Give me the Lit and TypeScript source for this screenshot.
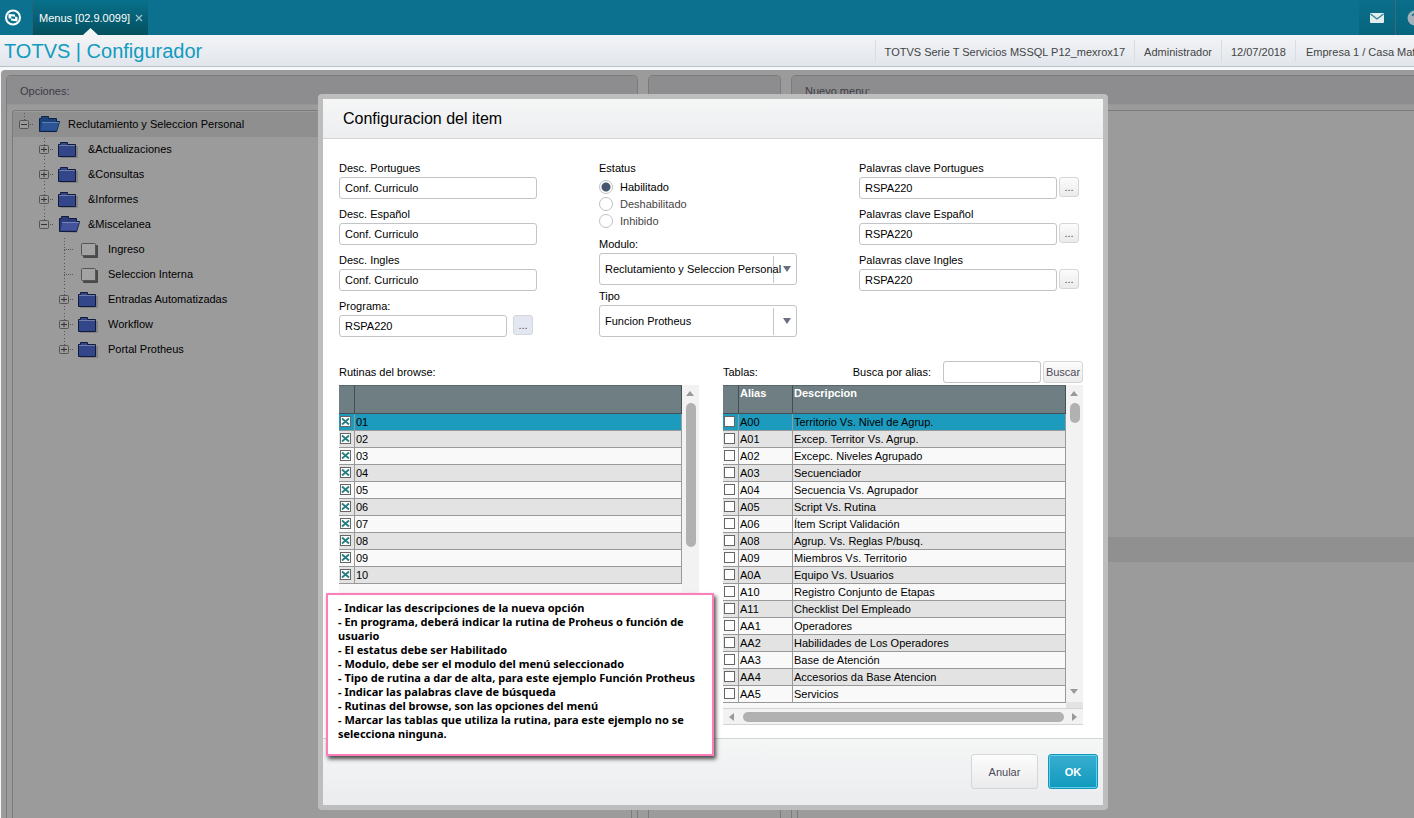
import { LitElement, html, svg, css, nothing } from "lit";
import { customElement, property } from "lit/decorators.js";
import { classMap } from "lit/directives/class-map.js";

interface TreeNode {
  label: string;
  icon: "open-root" | "open" | "closed" | "page";
  children?: TreeNode[];
}

const TREE: TreeNode = {
  label: "Reclutamiento y Seleccion Personal",
  icon: "open-root",
  children: [
    { label: "&Actualizaciones", icon: "closed" },
    { label: "&Consultas", icon: "closed" },
    { label: "&Informes", icon: "closed" },
    {
      label: "&Miscelanea",
      icon: "open",
      children: [
        { label: "Ingreso", icon: "page" },
        { label: "Seleccion Interna", icon: "page" },
        { label: "Entradas Automatizadas", icon: "closed" },
        { label: "Workflow", icon: "closed" },
        { label: "Portal Protheus", icon: "closed" },
      ],
    },
  ],
};

const ROUTINES = ["01", "02", "03", "04", "05", "06", "07", "08", "09", "10"];

const TABLES: [string, string][] = [
  ["A00", "Territorio Vs. Nivel de Agrup."],
  ["A01", "Excep. Territor Vs. Agrup."],
  ["A02", "Excepc. Niveles Agrupado"],
  ["A03", "Secuenciador"],
  ["A04", "Secuencia Vs. Agrupador"],
  ["A05", "Script Vs. Rutina"],
  ["A06", "Ítem Script Validación"],
  ["A08", "Agrup. Vs. Reglas P/busq."],
  ["A09", "Miembros Vs. Territorio"],
  ["A0A", "Equipo Vs. Usuarios"],
  ["A10", "Registro Conjunto de Etapas"],
  ["A11", "Checklist Del Empleado"],
  ["AA1", "Operadores"],
  ["AA2", "Habilidades de Los Operadores"],
  ["AA3", "Base de Atención"],
  ["AA4", "Accesorios da Base Atencion"],
  ["AA5", "Servicios"],
];

const NOTES = [
  "- Indicar las descripciones de la nueva opción",
  "- En programa, deberá indicar la rutina de Proheus o función de usuario",
  "- El estatus debe ser Habilitado",
  "- Modulo, debe ser el modulo del menú seleccionado",
  "- Tipo de rutina a dar de alta, para este ejemplo Función Protheus",
  "- Indicar las palabras clave de búsqueda",
  "- Rutinas del browse, son las opciones del menú",
  "- Marcar las tablas que utiliza la rutina, para este ejemplo no se selecciona ninguna.",
];

@customElement("menu-tree")
class MenuTree extends LitElement {
  static styles = css`
    :host { display: block; font-size: 11px; color: #000; }
    ul { list-style: none; margin: 0; padding: 0; }
    .branch { padding-left: 20px; }
    .row { display: flex; align-items: center; height: 25px; white-space: nowrap; }
    .row span { padding-bottom: 2px; }
    .selected { background: #8f8f8f; }
    .glyph { flex: none; width: 55px; height: 25px; }
  `;

  private icon(kind: TreeNode["icon"]) {
    if (kind === "page") {
      return svg`
        <rect x="30" y="8" width="15" height="13" rx="1" fill="#4a4a4a"/>
        <rect x="28.500" y="6.500" width="14" height="12" rx="1" fill="#a3a3a3" stroke="#555"/>`;
    }
    if (kind === "closed") {
      return svg`
        <rect x="27" y="9" width="18" height="12" rx="1" fill="#808080"/>
        <path d="M25.500 19.500 V7.500 H27.500 V5.500 H34.500 V7.500 H42.500 V19.500 Z" fill="#33468a" stroke="#101a3c"/>
        <path d="M26 8.500 H42" stroke="#6f7da8"/>`;
    }
    const root = kind === "open-root";
    return svg`
      <path d="M27 21 H44 L47 11 L45 11 L42 20 Z" fill="#858585"/>
      <path d="M26.500 19.500 V6.500 H28.500 V4.500 H35.500 V6.500 H43.500 V9.500 H46.500 L43.500 19.500 Z" fill=${root ? "#1c4279" : "#2b3b7c"} stroke=${root ? "#0b2447" : "#101a3c"}/>
      <path d="M29.500 10.500 H46 L43.500 18.500 H27.500 Z" fill=${root ? "#2d5596" : "#42539b"}/>
      <path d="M29 10.500 H46" stroke=${root ? "#5c82b5" : "#7482b4"}/>`;
  }

  private row(node: TreeNode, level: number, last: boolean): unknown {
    const open = !!node.children;
    const leaf = node.icon === "page";
    return html`
      <li role="treeitem" aria-expanded=${leaf ? nothing : String(open)}>
        <div class=${classMap({ row: true, selected: level === 0 })}>
          <svg class="glyph" viewBox="0 0 55 25" aria-hidden="true">
            <path d=${`M11.500 1 V${last ? 12 : 25}`} stroke="#555" stroke-dasharray="1 2"/>
            <path d="M11 12.500 H21" stroke="#555" stroke-dasharray="1 1"/>
            ${leaf ? nothing : svg`
              <rect x="6.500" y="8.500" width="9" height="8" rx="1" fill="#9b9b9b" stroke="#555"/>
              <path d="M8 12.500 H14" stroke="#333"/>
              ${open ? nothing : svg`<path d="M11 10 V15" stroke="#333"/>`}`}
            ${this.icon(node.icon)}
          </svg>
          <span>${node.label}</span>
        </div>
        ${node.children
          ? html`<ul role="group" class="branch">
              ${node.children.map((c, i) => this.row(c, level + 1, i === node.children!.length - 1))}
            </ul>`
          : nothing}
      </li>`;
  }

  render() {
    return html`<ul role="tree" aria-label="Opciones">${this.row(TREE, 0, true)}</ul>`;
  }
}

@customElement("scroll-rail")
class ScrollRail extends LitElement {
  @property({ type: Boolean, reflect: true }) horizontal = false;
  @property({ type: Boolean }) corner = false;
  @property() size = "20px";

  static styles = css`
    :host { display: flex; flex-direction: column; align-items: center; width: 17px; background: #f2f2f2; }
    :host([horizontal]) {
      flex-direction: row; width: auto; height: 17px; box-sizing: border-box;
      border-top: 1px solid #d4d4d4; border-bottom: 1px solid #d4d4d4;
    }
    svg { flex: none; width: 17px; height: 18px; }
    .thumb { width: 10px; border-radius: 5px; background: #b1b1b1; }
    .across { flex: 1; height: 10px; margin: 0 2px 0 3px; border-radius: 5px; background: #b1b1b1; }
    .space { flex: 1; }
    .corner { width: 17px; height: 6px; background: #e3e3e3; }
  `;

  render() {
    if (this.horizontal) {
      return html`
        <svg viewBox="0 0 17 18"><path d="M11 5 L6 9 L11 13 Z" fill="#999"/></svg>
        <div class="across"></div>
        <svg viewBox="0 0 17 18"><path d="M6 5 L11 9 L6 13 Z" fill="#999"/></svg>`;
    }
    return html`
      <svg viewBox="0 0 17 18"><path d="M4 11 L8 6 L12 11 Z" fill="#999"/></svg>
      <div class="thumb" style="height:${this.size}"></div>
      <div class="space"></div>
      <svg viewBox="0 0 17 18"><path d="M4 5 L8 10 L12 5 Z" fill="#999"/></svg>
      ${this.corner ? html`<div class="corner"></div>` : nothing}`;
  }
}

@customElement("item-dialog")
class ItemDialog extends LitElement {
  static styles = css`
    :host {
      display: block; position: relative; box-sizing: border-box; width: 790px; max-width: 100%;
      border: 5px solid #bdbdbd; border-radius: 4px; background: #fff; color: #000;
      font: 11px/14px "Liberation Sans", Arial, sans-serif;
    }
    input, select, button { font: inherit; color: inherit; margin: 0; box-sizing: border-box; }
    header {
      padding: 10px 20px; border-bottom: 1px solid #d3d5d6;
      background: linear-gradient(#f5f6f6, #eceef0);
    }
    h2 { margin: 0; font-size: 16px; line-height: 19px; font-weight: 400; }
    .body { padding: 22px 20px 13px 16px; }
    form { display: grid; grid-template-columns: 1fr 1fr 224px; margin: 0; }
    .column { display: flex; flex-direction: column; gap: 8px; }
    .field { display: flex; flex-direction: column; gap: 2px; }
    .line { display: flex; gap: 2px; }
    .wide { gap: 6px; }
    .text {
      width: 198px; height: 22px; padding: 0 5px; border: 1px solid #c2c4c8; border-radius: 3px;
      background: #fff; outline: none;
    }
    .program { width: 168px; }
    .more, .search-button, .cancel {
      border: 1px solid #d5d6d8; border-radius: 3px; background: linear-gradient(#fcfcfc, #ebebeb); color: #4c4c58; padding: 0;
    }
    .more { width: 20px; height: 20px; line-height: 16px; }
    .focused { background: #e3e7f2; }
    fieldset { margin: 0; padding: 0; border: 0; min-width: 0; }
    legend { padding: 0; margin: 0 0 3px; }
    .option { display: flex; align-items: center; gap: 7px; height: 17px; color: #444; }
    .option.on { color: #000; }
    .option input {
      appearance: none; width: 14px; height: 14px; border: 1px solid #bfc1c4; border-radius: 50%; background: #fff;
    }
    .option input:checked { background: radial-gradient(circle, #47566c 0 4px, #fff 5px); }
    .middle { gap: 4px; }
    .middle fieldset { margin-bottom: 4px; }
    select {
      appearance: none; width: 198px; height: 32px; padding: 0 4px 0 5px; border: 1px solid #c2c4c8; border-radius: 3px;
      background:
        url("data:image/svg+xml,%3Csvg xmlns='http://www.w3.org/2000/svg' width='8' height='6'%3E%3Cpath d='M0 0H8L4 6Z' fill='%236a6f80'/%3E%3C/svg%3E") no-repeat right 5px center,
        linear-gradient(#c2c4c8, #c2c4c8) no-repeat right 22px center / 1px 27px,
        #fff;
    }
    .lists { display: grid; grid-template-columns: 1fr 1fr; column-gap: 24px; margin-top: 24px; }
    .list { display: flex; flex-direction: column; }
    .caption { display: flex; align-items: center; height: 22px; margin-bottom: 2px; }
    .search { display: flex; align-items: center; margin-left: auto; gap: 2px; }
    .search label { margin-right: 10px; }
    .search .text { width: 98px; }
    .search-button { width: 40px; height: 22px; }
    .grid { flex: 1; display: grid; grid-template-columns: 1fr 17px; background: #f8f8f8; }
    .padded { padding-bottom: 5px; }
    .bounded { flex: none; }
    table { width: 100%; align-self: start; border-collapse: separate; border-spacing: 0; table-layout: fixed; }
    .tick { width: 16px; }
    .alias { width: 54px; }
    th, td { box-sizing: border-box; padding: 0 1px; text-align: left; border-right: 1px solid #999; overflow: hidden; white-space: nowrap; }
    th {
      height: 29px; vertical-align: top; color: #fff; font-weight: 700;
      background: #6e7e82; border-right-color: #454f52; border-bottom: 1px solid #454f52; border-top: 1px solid #596669;
    }
    td { height: 17px; line-height: 16px; border-bottom: 1px solid #999; background: #f9f9f9; }
    tr:nth-child(even) td { background: #e3e3e3; }
    tr.current td { background: #1d9bbe; }
    td input { appearance: none; display: block; width: 11px; height: 11px; margin-bottom: 2px; border: 1px solid #666; background: #fff; }
    td input:checked {
      background: #fff url("data:image/svg+xml,%3Csvg xmlns='http://www.w3.org/2000/svg' width='9' height='9'%3E%3Cpath d='M1 1.500L8 7.500M8 1.500L1 7.500' stroke='%23257f80' stroke-width='1.800'/%3E%3C/svg%3E") no-repeat center;
    }
    footer {
      display: flex; justify-content: flex-end; gap: 10px; padding: 15px 5px 16px;
      border-top: 1px solid #d3d5d6; background: linear-gradient(#f5f6f6, #eaecee);
    }
    .cancel { width: 67px; height: 35px; }
    .ok {
      width: 50px; height: 35px; padding: 0; border: 1px solid #1595b8; border-radius: 3px; color: #fff; font-weight: 700;
      background: linear-gradient(#38aed0, #109abd); box-shadow: inset 0 0 0 1px #5fd0ec;
    }
    .note {
      position: absolute; left: 3px; top: 494px; box-sizing: border-box; width: 388px; height: 163px; padding: 6px 10px;
      border: 2px solid #ff7dbb; background: #fff; box-shadow: 2px 3px 4px rgba(0, 0, 0, 0.7);
      font: 700 11px/14px "Noto Sans", Verdana, sans-serif;
    }
    .note p { margin: 0; }
  `;

  private textField(id: string, label: string, value: string, browse = false) {
    return html`
      <div class="field">
        <label for=${id}>${label}</label>
        <div class="line">
          <input class="text" id=${id} type="text" .value=${value} />
          ${browse ? html`<button type="button" class="more" aria-label=${"Buscar " + label}>...</button>` : nothing}
        </div>
      </div>`;
  }

  private radio(label: string, checked = false) {
    return html`
      <label class=${classMap({ option: true, on: checked })}>
        <input type="radio" name="estatus" .checked=${checked} />${label}
      </label>`;
  }

  render() {
    return html`
      <header><h2 id="title">Configuracion del item</h2></header>
      <div class="body">
        <form>
          <div class="column">
            ${this.textField("desc-pt", "Desc. Portugues", "Conf. Curriculo")}
            ${this.textField("desc-es", "Desc. Español", "Conf. Curriculo")}
            ${this.textField("desc-en", "Desc. Ingles", "Conf. Curriculo")}
            <div class="field">
              <label for="program">Programa:</label>
              <div class="line wide">
                <input class="text program" id="program" type="text" .value=${"RSPA220"} />
                <button type="button" class="more focused" aria-label="Buscar programa">...</button>
              </div>
            </div>
          </div>
          <div class="column middle">
            <fieldset>
              <legend>Estatus</legend>
              ${this.radio("Habilitado", true)} ${this.radio("Deshabilitado")} ${this.radio("Inhibido")}
            </fieldset>
            <div class="field">
              <label for="module">Modulo:</label>
              <select id="module"><option>Reclutamiento y Seleccion Personal</option></select>
            </div>
            <div class="field">
              <label for="kind">Tipo</label>
              <select id="kind"><option>Funcion Protheus</option></select>
            </div>
          </div>
          <div class="column">
            ${this.textField("key-pt", "Palavras clave Portugues", "RSPA220", true)}
            ${this.textField("key-es", "Palavras clave Español", "RSPA220", true)}
            ${this.textField("key-en", "Palavras clave Ingles", "RSPA220", true)}
          </div>
        </form>

        <div class="lists">
          <section class="list">
            <div class="caption">Rutinas del browse:</div>
            <div class="grid">
              <table aria-label="Rutinas del browse">
                <colgroup><col class="tick" /><col /></colgroup>
                <thead><tr><th></th><th></th></tr></thead>
                <tbody>
                  ${ROUTINES.map((r, i) => html`
                    <tr class=${classMap({ current: i === 0 })}>
                      <td><input type="checkbox" aria-label=${r} .checked=${true} /></td>
                      <td>${r}</td>
                    </tr>`)}
                </tbody>
              </table>
              <scroll-rail size="144px"></scroll-rail>
            </div>
          </section>
          <section class="list">
            <div class="caption">
              <span>Tablas:</span>
              <div class="search">
                <label for="alias">Busca por alias:</label>
                <input class="text" id="alias" type="text" />
                <button type="button" class="search-button">Buscar</button>
              </div>
            </div>
            <div class="grid bounded">
              <div class="padded">
                <table aria-label="Tablas">
                  <colgroup><col class="tick" /><col class="alias" /><col /></colgroup>
                  <thead><tr><th></th><th>Alias</th><th>Descripcion</th></tr></thead>
                  <tbody>
                    ${TABLES.map(([alias, text], i) => html`
                      <tr class=${classMap({ current: i === 0 })}>
                        <td><input type="checkbox" aria-label=${alias} /></td>
                        <td>${alias}</td>
                        <td>${text}</td>
                      </tr>`)}
                  </tbody>
                </table>
              </div>
              <scroll-rail size="20px" corner></scroll-rail>
            </div>
            <scroll-rail horizontal></scroll-rail>
          </section>
        </div>
      </div>
      <footer>
        <button type="button" class="cancel">Anular</button>
        <button type="button" class="ok">OK</button>
      </footer>
      <aside class="note">${NOTES.map((n) => html`<p>${n}</p>`)}</aside>`;
  }
}

@customElement("app-root")
class AppRoot extends LitElement {
  static styles = css`
    :host {
      display: flex; flex-direction: column; min-height: 100vh; overflow: hidden; background: #f6f7f8;
      font: 11px/14px "Liberation Sans", Arial, sans-serif; color: #333;
    }
    button { font: inherit; color: inherit; padding: 0; border: 0; background: none; }
    .topbar { display: flex; height: 35px; background: #0b718e; color: #fff; }
    .home { width: 33px; border-right: 1px solid #27637a; display: flex; align-items: center; padding-left: 4px; box-sizing: border-box; }
    .tab {
      position: relative; display: flex; align-items: center; gap: 5px; padding: 0 5px 0 6px;
      background: linear-gradient(#08718c, #04505f);
    }
    .tab .close { display: flex; color: #9fc3ce; }
    .notch { position: absolute; left: 50px; bottom: 0; }
    .actions { display: flex; margin-left: auto; }
    .mail { width: 37px; display: flex; align-items: center; justify-content: center; background: linear-gradient(#0a6f8b, #07657d); border-right: 1px solid #3c6878; box-sizing: border-box; }
    .help { width: 18px; overflow: hidden; display: flex; align-items: center; padding-left: 11px; background: linear-gradient(#0a6f8b, #07657d); box-sizing: border-box; }
    .help svg { flex: none; }
    .titlebar {
      display: flex; align-items: center; height: 31px; padding-left: 4px; overflow: hidden;
      border-bottom: 1px solid #b9c1c9; background: linear-gradient(#f3f4f6, #e1e6ec);
    }
    h1 { margin: 0; font-size: 20px; line-height: 24px; font-weight: 400; color: #109bc0; white-space: nowrap; }
    .status { display: flex; list-style: none; margin: 0 0 0 auto; padding: 0; color: #444; white-space: nowrap; }
    .status li { padding: 5px 9px 3px; border-left: 1px solid #d9dde2; }
    .status li:last-child { flex: none; width: 119px; box-sizing: border-box; padding: 5px 0 3px 10px; overflow: hidden; }
    .stage { flex: 1; display: grid; grid-template-columns: minmax(0, 1fr); margin: 3px 0 0 1px; background: #9b9b9b; border-radius: 4px 0 0 0; }
    .workspace { grid-area: 1 / 1; display: grid; grid-template-columns: 1fr 133px 1fr; gap: 10px; width: calc(100% + 15px); box-sizing: border-box; padding: 5px 6px 0 5px; }
    .panel { display: flex; flex-direction: column; border: 1px solid #7b7b7b; border-bottom: 0; border-radius: 5px 5px 0 0; }
    .panel-title { height: 29px; padding: 0 13px; line-height: 31px; border-bottom: 1px solid #969696; border-radius: 4px 4px 0 0; background: #8d8d8f; box-sizing: border-box; color: #3c3c44; }
    .inset { flex: 1; margin: 5px 5px 0; border: 1px solid #7b7b7b; border-bottom: 0; border-radius: 3px 3px 0 0; padding-top: 1px; }
    .result { padding-top: 426px; }
    .band { height: 25px; background: #909090; }
    item-dialog { grid-area: 1 / 1; z-index: 1; justify-self: center; align-self: start; margin: 24px 0 8px 11px; }
  `;

  render() {
    return html`
      <nav class="topbar">
        <button class="home" aria-label="Inicio">
          <svg width="18" height="18" viewBox="0 0 18 18">
            <circle cx="9" cy="8.500" r="7" fill="none" stroke="#fff" stroke-width="2"/>
            <path d="M4.500 5 L11 5.500 V7.500 L13.500 8 V12.500 L7 11.500 V9.800 L4.500 9.300 Z" fill="#fff"/>
            <path d="M7.200 7.200 L11 7.700 V10 L7.200 9.500 Z" fill="#0b718e"/>
          </svg>
        </button>
        <div class="tab">
          <span>Menus [02.9.0099]</span>
          <button class="close" aria-label="Cerrar">
            <svg width="8" height="8" viewBox="0 0 8 8"><path d="M1 1 L7 7 M7 1 L1 7" stroke="currentColor" stroke-width="1.200"/></svg>
          </button>
          <svg class="notch" width="15" height="7" viewBox="0 0 15 7"><path d="M0 7 L7.500 0 L15 7 Z" fill="#f3f4f6"/></svg>
        </div>
        <div class="actions">
          <button class="mail" aria-label="Mensajes">
            <svg width="14" height="10" viewBox="0 0 14 10">
              <rect width="14" height="10" rx="1" fill="#e3edf0"/>
              <path d="M0.500 1 L7 6 L13.500 1" fill="none" stroke="#2c7f95" stroke-width="1.300"/>
            </svg>
          </button>
          <button class="help" aria-label="Ayuda">
            <svg width="16" height="16" viewBox="0 0 16 16">
              <circle cx="8" cy="8" r="7.500" fill="#a3b1b9"/>
              <path d="M5.500 6 Q6 3.800 8 3.800 Q10.500 4 10.300 6 Q9.800 7.500 8 8.500 V10 M8 11.500 V13" fill="none" stroke="#07657d" stroke-width="1.500"/>
            </svg>
          </button>
        </div>
      </nav>
      <div class="titlebar">
        <h1>TOTVS | Configurador</h1>
        <ul class="status">
          <li>TOTVS Serie T Servicios MSSQL P12_mexrox17</li>
          <li>Administrador</li>
          <li>12/07/2018</li>
          <li>Empresa 1 / Casa Matriz</li>
        </ul>
      </div>
      <main class="stage">
        <div class="workspace">
          <section class="panel">
            <div class="panel-title">Opciones:</div>
            <div class="inset"><menu-tree></menu-tree></div>
          </section>
          <section class="panel"><div class="panel-title"></div></section>
          <section class="panel">
            <div class="panel-title">Nuevo menu:</div>
            <div class="inset result"><div class="band"></div></div>
          </section>
        </div>
        <item-dialog role="dialog" aria-label="Configuracion del item"></item-dialog>
      </main>`;
  }
}
